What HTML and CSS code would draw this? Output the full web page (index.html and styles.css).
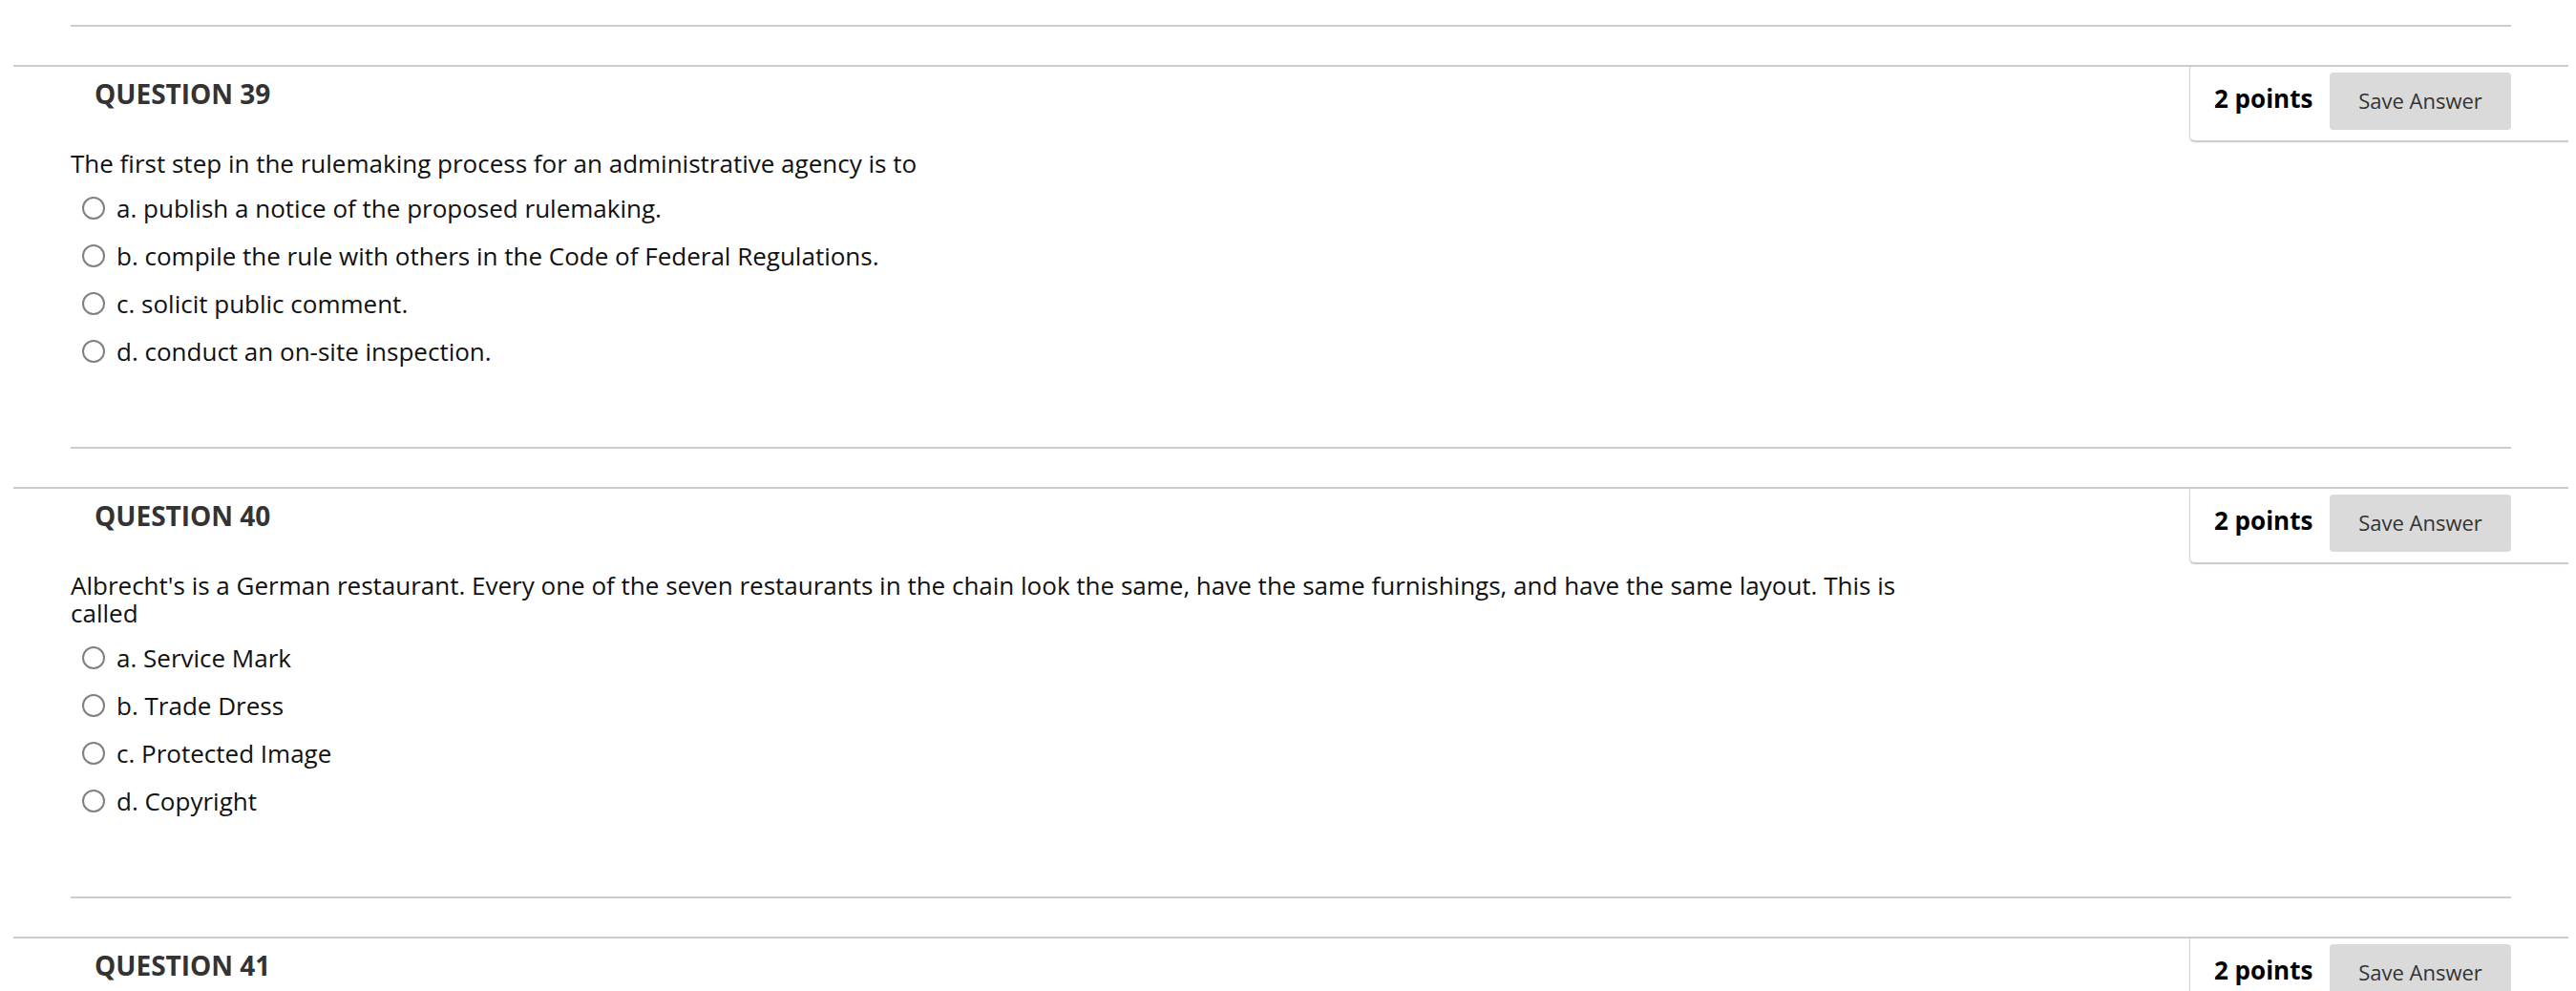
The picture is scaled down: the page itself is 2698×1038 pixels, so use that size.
FILE: index.html
```html
<!DOCTYPE html>
<html lang="en">
<head>
<meta charset="utf-8">
<title>Test</title>
<link rel="stylesheet" href="styles.css">
</head>
<body>
<div class="page">
  <div class="q-tail">
    <div class="sep"></div>
  </div>

  <section class="q">
    <div class="q-head">
      <h3 class="q-title">QUESTION 39</h3>
      <div class="q-panel">
        <span class="q-points">2 points</span>
        <button class="q-save" type="button">Save Answer</button>
      </div>
    </div>
    <div class="q-body">
      <div class="q-text">The first step in the rulemaking process for an administrative agency is to</div>
      <ul class="q-options">
        <li class="q-option"><input type="radio" name="q39" class="q-radio"><span class="q-label">a. publish a notice of the proposed rulemaking.</span></li>
        <li class="q-option"><input type="radio" name="q39" class="q-radio"><span class="q-label">b. compile the rule with others in the Code of Federal Regulations.</span></li>
        <li class="q-option"><input type="radio" name="q39" class="q-radio"><span class="q-label">c. solicit public comment.</span></li>
        <li class="q-option"><input type="radio" name="q39" class="q-radio"><span class="q-label">d. conduct an on-site inspection.</span></li>
      </ul>
    </div>
    <div class="sep"></div>
  </section>

  <section class="q">
    <div class="q-head">
      <h3 class="q-title">QUESTION 40</h3>
      <div class="q-panel">
        <span class="q-points">2 points</span>
        <button class="q-save" type="button">Save Answer</button>
      </div>
    </div>
    <div class="q-body">
      <div class="q-text q-text-wrap">Albrecht's is a German restaurant. Every one of the seven restaurants in the chain look the same, have the same furnishings, and have the same layout. This is called</div>
      <ul class="q-options">
        <li class="q-option"><input type="radio" name="q40" class="q-radio"><span class="q-label">a. Service Mark</span></li>
        <li class="q-option"><input type="radio" name="q40" class="q-radio"><span class="q-label">b. Trade Dress</span></li>
        <li class="q-option"><input type="radio" name="q40" class="q-radio"><span class="q-label">c. Protected Image</span></li>
        <li class="q-option"><input type="radio" name="q40" class="q-radio"><span class="q-label">d. Copyright</span></li>
      </ul>
    </div>
    <div class="sep"></div>
  </section>

  <section class="q">
    <div class="q-head">
      <h3 class="q-title">QUESTION 41</h3>
      <div class="q-panel">
        <span class="q-points">2 points</span>
        <button class="q-save" type="button">Save Answer</button>
      </div>
    </div>
  </section>
</div>
</body>
</html>
```

FILE: styles.css
```css
html, body {
  margin: 0;
  padding: 0;
  background: #ffffff;
}

body {
  font-family: "Open Sans", "Liberation Sans", sans-serif;
  color: #111111;
  overflow: hidden;
}

.page {
  width: 2698px;
}

.q-tail {
  margin: 0 8px 0 14px;
  padding-top: 26px;
  padding-bottom: 40px;
}

.sep {
  height: 2px;
  background: #cccccc;
  margin: 0 60px;
}

.q {
  margin: 0 8px 0 14px;
  border-top: 2px solid #cccccc;
  padding-bottom: 40px;
}

.q-head {
  display: flex;
  justify-content: space-between;
  align-items: flex-start;
}

.q-title {
  margin: 10px 0 0 85px;
  font-size: 28px;
  line-height: 37px;
  font-weight: 700;
  color: #333333;
}

.q-panel {
  box-sizing: border-box;
  width: 397px;
  height: 79px;
  padding: 6px 60px 11px 25px;
  display: flex;
  align-items: center;
  justify-content: space-between;
  border-left: 1px solid #d6d6d6;
  border-bottom: 2px solid #cccccc;
  border-bottom-left-radius: 6px;
  box-shadow: -1px 1px 2px rgba(0, 0, 0, 0.04);
}

.q-points {
  font-size: 26px;
  font-weight: 700;
  color: #000000;
  line-height: 36px;
  margin-bottom: 6px;
}

.q-save {
  width: 190px;
  height: 60px;
  border: none;
  border-radius: 4px;
  background: #dadada;
  color: #333333;
  font-family: "Open Sans", "Liberation Sans", sans-serif;
  font-size: 22px;
  padding: 0 0 3px 0;
}

.q-body {
  padding: 0 60px;
}

.q-text {
  margin-top: 8px;
  font-size: 26px;
  line-height: 29px;
  color: #111111;
}

.q-text-wrap {
  max-width: 1960px;
}

.q-options {
  list-style: none;
  margin: 7px 0 75px 0;
  padding: 0 0 0 12px;
}

.q-option {
  height: 50px;
  display: flex;
  align-items: center;
  gap: 12px;
}

.q-radio {
  appearance: none;
  -webkit-appearance: none;
  box-sizing: border-box;
  width: 24px;
  height: 24px;
  margin: 0;
  border: 2px solid #808080;
  border-radius: 50%;
  background: #ffffff;
  flex: none;
}

.q-label {
  font-size: 26px;
  line-height: 29px;
  color: #111111;
}
```
